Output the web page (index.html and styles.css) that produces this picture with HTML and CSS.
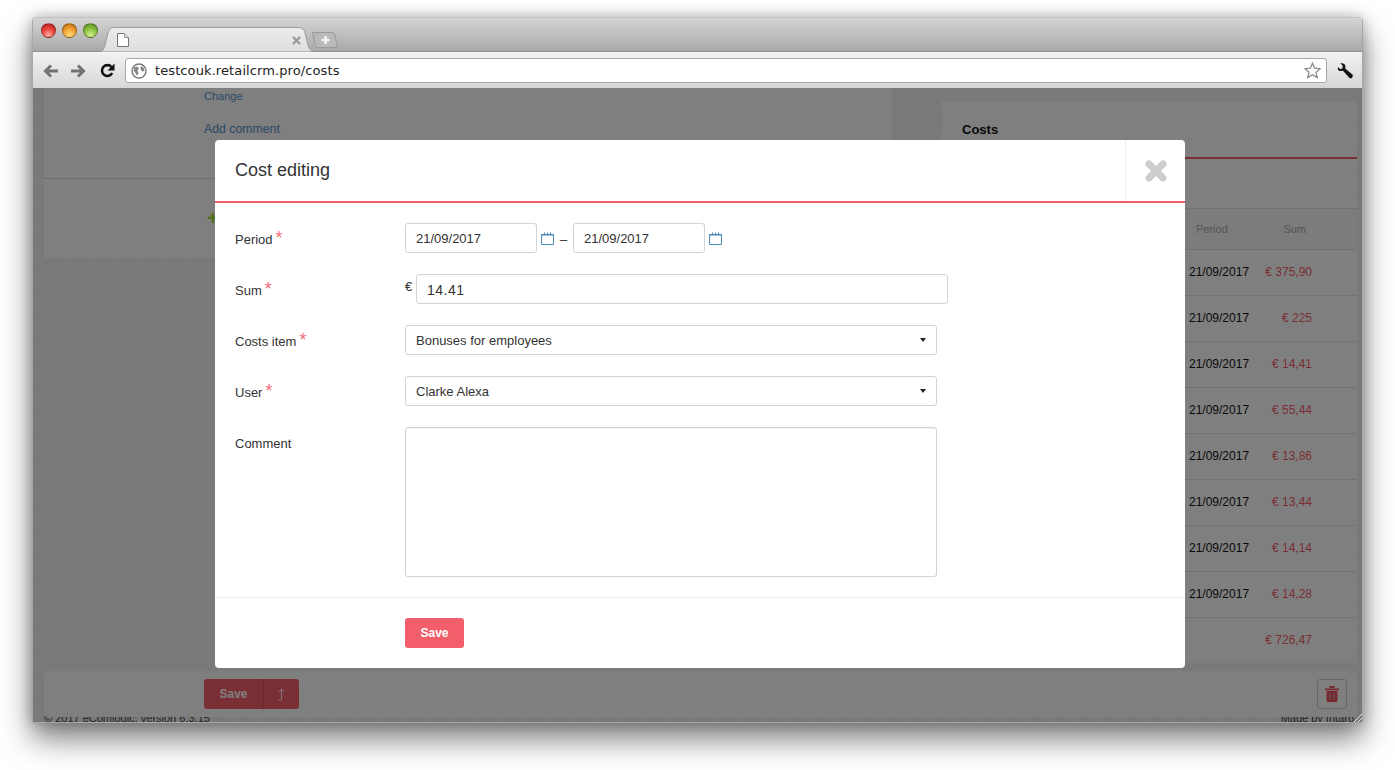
FILE: index.html
```html
<!DOCTYPE html>
<html lang="en">
<head>
    <meta charset="UTF-8">
    <title>testcouk.retailcrm.pro/costs</title>
    <link rel="stylesheet" href="styles.css">
</head>
<body>
    <div class="window">
        <div class="tabstrip">
            <div class="traffic">
                <span class="light light-red"></span>
                <span class="light light-amber"></span>
                <span class="light light-green"></span>
            </div>
            <div class="tab">
                <svg class="tab-shape" width="216" height="25" viewBox="0 0 216 25">
                    <defs>
                        <linearGradient id="tabFill" x1="0" y1="0" x2="0" y2="1">
                            <stop offset="0" stop-color="#ececec"/>
                            <stop offset="1" stop-color="#dedede"/>
                        </linearGradient>
                    </defs>
                    <path d="M0 24.5C4 24.5 5 22 6 18L9 6C10 2 12 .5 16 .5H199C203 .5 205 2 206 6L209 18C210 22 212 24.5 216 24.5" fill="url(#tabFill)" stroke="#9a9a9a"/>
                </svg>
                <svg class="tab-page" width="12" height="14" viewBox="0 0 12 14">
                    <path d="M.5.5H7.5L11.5 4.5V13.5H.5Z" fill="#fff" stroke="#777"/>
                    <path d="M7.5.5V4.5H11.5" fill="#e8e8e8" stroke="#999"/>
                </svg>
                <svg class="tab-close" width="9" height="9" viewBox="0 0 9 9">
                    <path d="M1 1L8 8M8 1L1 8" stroke="#999" stroke-width="2.4"/>
                </svg>
            </div>
            <div class="newtab">
                <svg width="26" height="16" viewBox="0 0 26 16">
                    <path d="M.5.5H20C22 .5 22.5 1.5 23 3L25.5 15.5H6C4 15.5 3.5 14 3 12.5Z" fill="#b9b9b9" stroke="#999"/>
                    <path d="M13.5 4V12M9.5 8H17.5" stroke="#f4f4f4" stroke-width="2.6"/>
                </svg>
            </div>
        </div>

        <div class="toolbar">
            <svg class="nav-icon" width="16" height="14" viewBox="0 0 16 14">
                <path d="M15 7H3M8 1.5L2.5 7L8 12.5" fill="none" stroke="#737373" stroke-width="3"/>
            </svg>
            <svg class="nav-icon nav-forward" width="16" height="14" viewBox="0 0 16 14">
                <path d="M1 7H13M8 1.5L13.5 7L8 12.5" fill="none" stroke="#737373" stroke-width="3"/>
            </svg>
            <svg class="nav-icon" width="15" height="15" viewBox="0 0 15 15">
                <path d="M12.2 10A5.4 5.4 0 1 1 11.5 4" fill="none" stroke="#111" stroke-width="2.6"/>
                <path d="M14.5 .5V7.5H7.5Z" fill="#111"/>
            </svg>
            <div class="omnibox">
                <svg class="globe" width="16" height="16" viewBox="0 0 16 16">
                    <circle cx="8" cy="8" r="7" fill="#fff" stroke="#777" stroke-width="1.4"/>
                    <path d="M3 4.5L6 3.5L8 5L6.5 7.5L7.5 10L6 13L4.5 10L2.5 7.5ZM10 3L13 5L13.5 8L11 8.5L9.5 6Z" fill="#888"/>
                </svg>
                <span class="url">testcouk.retailcrm.pro/costs</span>
                <svg class="star" width="17" height="17" viewBox="0 0 17 17">
                    <path d="M8.5 1.2L10.7 6.2L16 6.7L12 10.3L13.2 15.6L8.5 12.8L3.8 15.6L5 10.3L1 6.7L6.3 6.2Z" fill="#fff" stroke="#8a8a8a" stroke-width="1.3"/>
                </svg>
            </div>
            <svg class="wrench" width="16" height="16" viewBox="0 0 16 16">
                <path d="M1 4.2L3.6 6.2L5.6 5L5.6 2.6L3.4.6C5.8-.2 8.2 1 8.4 3.6L8.2 5.4L15.4 11.6C16.2 12.6 15.8 14 15 14.8C14 15.6 12.8 15.6 12 14.6L6 7.8L4 8C1.6 8 .2 6.4 1 4.2Z" fill="#111"/>
            </svg>
        </div>

        <div class="page">
            <div class="page-columns">
                <div class="order-panel">
                    <div class="order-top">
                        <a class="link-small">Change</a>
                        <a class="link-comment">Add comment</a>
                    </div>
                    <div class="order-bottom">
                        <span class="plus">+</span>
                    </div>
                </div>
                <div class="costs-panel">
                    <div class="costs-title">Costs</div>
                    <div class="costs-gap"></div>
                    <div class="cost-row cost-head">
                        <span class="col-date">Period</span>
                        <span class="col-sum">Sum</span>
                    </div>
                    <div class="cost-row"><span class="col-date">21/09/2017</span><span class="col-sum">€ 375,90</span></div>
                    <div class="cost-row"><span class="col-date">21/09/2017</span><span class="col-sum">€ 225</span></div>
                    <div class="cost-row"><span class="col-date">21/09/2017</span><span class="col-sum">€ 14,41</span></div>
                    <div class="cost-row"><span class="col-date">21/09/2017</span><span class="col-sum">€ 55,44</span></div>
                    <div class="cost-row"><span class="col-date">21/09/2017</span><span class="col-sum">€ 13,86</span></div>
                    <div class="cost-row"><span class="col-date">21/09/2017</span><span class="col-sum">€ 13,44</span></div>
                    <div class="cost-row"><span class="col-date">21/09/2017</span><span class="col-sum">€ 14,14</span></div>
                    <div class="cost-row"><span class="col-date">21/09/2017</span><span class="col-sum">€ 14,28</span></div>
                    <div class="cost-row"><span class="col-date"></span><span class="col-sum">€ 726,47</span></div>
                </div>
            </div>

            <div class="action-bar">
                <div class="split-btn">
                    <span class="split-save">Save</span>
                    <span class="split-up">
                        <svg width="9" height="13" viewBox="0 0 10 15">
                            <path d="M1.5 14H3.5C4.5 14 5 13.5 5 12.5V2M2 4.5L5 1.2L8 4.5" fill="none" stroke="#fff" stroke-width="1.1"/>
                        </svg>
                    </span>
                </div>
                <div class="trash-btn">
                    <svg width="14" height="16" viewBox="0 0 14 16">
                        <path d="M0 2.5H14V4.2H0ZM4.5 0H9.5V2H4.5ZM1.5 5H12.5V14.5C12.5 15.4 12 16 11 16H3C2 16 1.5 15.4 1.5 14.5Z" fill="#f0505c"/>
                        <path d="M5 7V14M9 7V14" stroke="#c8b0b0" stroke-width="1.2"/>
                    </svg>
                </div>
            </div>
            <div class="page-footer">
                <span>© 2017 eComlogic, version 6.3.15</span>
                <span>Made by Intaro</span>
            </div>

            <div class="overlay"></div>

            <div class="modal">
                <div class="modal-head">
                    <div class="modal-title">Cost editing</div>
                    <div class="modal-close">
                        <svg width="22" height="22" viewBox="0 0 22 22">
                            <path d="M4 4L18 18M18 4L4 18" stroke="#cdcdcd" stroke-width="7" stroke-linecap="round"/>
                        </svg>
                    </div>
                </div>
                <div class="modal-body">
                    <div class="form-row">
                        <label class="form-label">Period<span class="req">*</span></label>
                        <div class="form-controls">
                            <div class="input input-date">21/09/2017</div>
                            <svg class="cal" width="13" height="13" viewBox="0 0 13 13">
                                <path d="M.5 2.5H12.5V12.5H.5Z" fill="none" stroke="#4a8ab5"/>
                                <path d="M.5 3H12.5M3.5 .5V3M6.5 .5V3M9.5 .5V3" stroke="#4a8ab5"/>
                            </svg>
                            <span class="dash">–</span>
                            <div class="input input-date">21/09/2017</div>
                            <svg class="cal" width="13" height="13" viewBox="0 0 13 13">
                                <path d="M.5 2.5H12.5V12.5H.5Z" fill="none" stroke="#4a8ab5"/>
                                <path d="M.5 3H12.5M3.5 .5V3M6.5 .5V3M9.5 .5V3" stroke="#4a8ab5"/>
                            </svg>
                        </div>
                    </div>
                    <div class="form-row">
                        <label class="form-label">Sum<span class="req">*</span></label>
                        <div class="form-controls">
                            <span class="currency">€</span>
                            <div class="input input-sum">14.41</div>
                        </div>
                    </div>
                    <div class="form-row">
                        <label class="form-label">Costs item<span class="req">*</span></label>
                        <div class="form-controls">
                            <div class="input input-select">Bonuses for employees<span class="caret"></span></div>
                        </div>
                    </div>
                    <div class="form-row">
                        <label class="form-label">User<span class="req">*</span></label>
                        <div class="form-controls">
                            <div class="input input-select">Clarke Alexa<span class="caret"></span></div>
                        </div>
                    </div>
                    <div class="form-row form-row-last">
                        <label class="form-label">Comment</label>
                        <div class="form-controls">
                            <div class="input input-area"></div>
                        </div>
                    </div>
                </div>
                <div class="modal-foot">
                    <div class="btn-save">Save</div>
                </div>
            </div>

            <div class="grip"></div>
        </div>
    </div>
</body>
</html>
```

FILE: styles.css
```css
* {
    margin: 0;
    padding: 0;
    box-sizing: border-box;
}

html, body {
    height: 100%;
    background: #fff;
    overflow: hidden;
}

body {
    font-family: 'Liberation Sans', Arial, sans-serif;
    padding: 17px 32px 0 32px;
    color: #333;
}

.window {
    width: 1331px;
    height: 706px;
    border: 1px solid #a8a8a8;
    border-top: 0;
    border-radius: 4px 4px 0 0;
    box-shadow: 0 16px 30px rgba(0, 0, 0, 0.5), 0 0 14px rgba(0, 0, 0, 0.25);
    display: flex;
    flex-direction: column;
    overflow: hidden;
}

/* browser chrome */
.tabstrip {
    height: 35px;
    background: linear-gradient(#d4d4d4, #a9a9a9);
    border-top: 1px solid #c2c2c2;
    border-bottom: 1px solid #8f8f8f;
    display: flex;
    align-items: flex-end;
    padding-left: 8px;
    flex-shrink: 0;
}

.traffic {
    display: flex;
    gap: 6px;
    align-self: flex-start;
    padding-top: 5px;
    width: 58px;
}

.light {
    width: 15px;
    height: 15px;
    flex-shrink: 0;
    border-radius: 50%;
    border: 1px solid rgba(0, 0, 0, 0.3);
}

.light-red {
    background: radial-gradient(circle at 50% 85%, #ffb0a8 0, #ee4a40 45%, #b01818 100%);
}

.light-amber {
    background: radial-gradient(circle at 50% 85%, #ffe27a 0, #f0a030 50%, #b86a10 100%);
}

.light-green {
    background: radial-gradient(circle at 50% 85%, #d5f090 0, #8cc040 50%, #4f8a20 100%);
}

.tab {
    position: relative;
    width: 216px;
    height: 25px;
    margin-bottom: -1px;
    flex-shrink: 0;
}

.tab-shape {
    position: absolute;
    left: 0;
    top: 0;
}

.tab-page {
    position: absolute;
    left: 18px;
    top: 6px;
}

.tab-close {
    position: absolute;
    left: 193px;
    top: 9px;
}

.newtab {
    margin-left: -3px;
    margin-bottom: 3px;
    height: 16px;
}

.toolbar {
    height: 36px;
    background: linear-gradient(#f2f2f2, #d6d6d6);
    border-top: 1px solid #f6f6f6;
    display: flex;
    align-items: center;
    padding-left: 10px;
    flex-shrink: 0;
}

.nav-icon {
    margin-right: 11px;
    flex-shrink: 0;
}

.nav-forward {
    margin-right: 14px;
}

.omnibox {
    width: 1202px;
    height: 25px;
    margin-left: -1px;
    background: #fff;
    border: 1px solid #a8a8a8;
    border-radius: 3px;
    display: flex;
    align-items: center;
    padding: 0 5px;
}

.globe {
    margin-right: 8px;
    flex-shrink: 0;
}

.url {
    font-family: 'DejaVu Sans', sans-serif;
    font-size: 13px;
    letter-spacing: 0.1px;
    color: #222;
    flex: 1;
}

.wrench {
    margin-left: 10px;
}

/* page behind the dialog */
.page {
    flex: 1;
    position: relative;
    background-color: #f5f5f5;
    background-image:
        repeating-linear-gradient(0deg, rgba(0, 0, 0, 0.012) 0 1px, transparent 1px 3px),
        repeating-linear-gradient(90deg, rgba(0, 0, 0, 0.012) 0 1px, transparent 1px 3px);
    overflow: hidden;
    padding: 0 5px 0 11px;
}

.page-columns {
    display: flex;
    justify-content: space-between;
    align-items: flex-start;
    height: 583px;
}

.order-panel {
    width: 848px;
    background: #fff;
    height: 170px;
    font-size: 12px;
}

.order-top {
    height: 91px;
    border-bottom: 1px solid #ddd;
    padding: 2px 0 0 160px;
    display: flex;
    flex-direction: column;
}

.link-small {
    font-size: 11px;
    line-height: 12px;
    color: #5590cc;
}

.link-comment {
    margin-top: 20px;
    line-height: 14px;
    font-size: 12.3px;
    color: #5590cc;
}

.order-bottom {
    padding: 29px 0 0 163px;
}

.plus {
    font-size: 20px;
    font-weight: 700;
    color: #a0e030;
    line-height: 20px;
}

.costs-panel {
    width: 415px;
    margin-top: 13px;
    background: #fff;
    font-size: 12px;
}

.costs-title {
    height: 58px;
    padding: 21px 0 0 20px;
    font-size: 13px;
    font-weight: 700;
    color: #111;
    border-bottom: 2px solid #f25f6a;
}

.costs-gap {
    height: 49px;
}

.cost-row {
    height: 46px;
    border-top: 1px solid #e4e4e4;
    display: flex;
    justify-content: flex-end;
    align-items: center;
    padding: 0 45px 2px 0;
    color: #111;
}

.cost-head {
    height: 41px;
    background: #f8f8f8;
    font-size: 11px;
    padding-bottom: 0;
}

.col-date {
    width: 60px;
}

.col-sum {
    width: 63px;
    text-align: right;
    color: #f25f6a;
}

.cost-head .col-date {
    padding-left: 7px;
    color: #aaa;
}

.cost-head .col-sum {
    color: #aaa;
    padding-right: 6px;
}

.action-bar {
    height: 46px;
    background: #fff;
    border-radius: 4px;
    display: flex;
    justify-content: space-between;
    align-items: center;
    padding: 0 10px 0 160px;
    position: relative;
}

.split-btn {
    display: flex;
    height: 30px;
    width: 95px;
    border-radius: 3px;
    background: #f25f6a;
    color: #fff;
    font-size: 12px;
    font-weight: 700;
    overflow: hidden;
}

.split-save {
    width: 60px;
    line-height: 30px;
    text-align: center;
    border-right: 1px solid #d84c56;
}

.split-up {
    flex: 1;
    display: flex;
    align-items: center;
    justify-content: center;
}

.trash-btn {
    width: 30px;
    height: 30px;
    border: 1px solid #ccc;
    border-radius: 3px;
    display: flex;
    align-items: center;
    justify-content: center;
}

.page-footer {
    display: flex;
    justify-content: space-between;
    font-size: 11px;
    margin-top: -5px;
    padding-right: 3px;
    color: #444;
}

.overlay {
    position: absolute;
    inset: 0;
    background: rgba(0, 0, 0, 0.5);
}

.grip {
    position: absolute;
    right: 0;
    bottom: 0;
    width: 10px;
    height: 10px;
    background: repeating-linear-gradient(135deg, transparent 0 2px, #ddd 2px 3px);
    clip-path: polygon(100% 0, 100% 100%, 0 100%);
}

/* dialog */
.modal {
    position: absolute;
    left: 182px;
    top: 52px;
    width: 970px;
    height: 528px;
    background: #fff;
    border-radius: 4px;
    display: flex;
    flex-direction: column;
}

.modal-head {
    height: 63px;
    border-bottom: 2px solid #f25f6a;
    display: flex;
    justify-content: space-between;
    flex-shrink: 0;
}

.modal-title {
    font-size: 18px;
    line-height: 61px;
    padding-left: 20px;
    color: #333;
}

.modal-close {
    width: 60px;
    border-left: 1px solid #eee;
    display: flex;
    align-items: center;
    justify-content: center;
}

.modal-body {
    flex: 1;
    padding: 20px 20px 0 20px;
    border-bottom: 1px solid #eee;
    display: flex;
    flex-direction: column;
    gap: 21px;
}

.form-row {
    display: flex;
    height: 30px;
}

.form-row-last {
    height: 150px;
}

.form-label {
    width: 170px;
    font-size: 13px;
    line-height: 34px;
    color: #333;
    flex-shrink: 0;
}

.req {
    color: #f4707a;
    font-size: 18px;
    margin-left: 3px;
    line-height: 16px;
}

.form-controls {
    display: flex;
    align-items: flex-start;
}

.input {
    height: 30px;
    border: 1px solid #d4d4d4;
    border-radius: 3px;
    background: #fff;
    font-size: 13px;
    line-height: 30px;
    padding: 0 10px;
    color: #333;
    position: relative;
}

.input-date {
    width: 132px;
}

.cal {
    margin: 9px 0 0 4px;
}

.dash {
    font-size: 13px;
    line-height: 34px;
    width: 19px;
    text-align: center;
}

.currency {
    font-size: 13px;
    width: 11px;
    line-height: 26px;
}

.input-sum {
    width: 532px;
    font-size: 14px;
    letter-spacing: 0.5px;
}

.input-select {
    width: 532px;
}

.input-area {
    width: 532px;
    height: 150px;
    box-shadow: inset 0 1px 1px rgba(0, 0, 0, 0.05);
}

.caret {
    position: absolute;
    right: 10px;
    top: 12px;
    width: 0;
    height: 0;
    border-left: 3.5px solid transparent;
    border-right: 3.5px solid transparent;
    border-top: 4px solid #222;
}

.modal-foot {
    height: 70px;
    padding: 20px 0 0 190px;
    flex-shrink: 0;
}

.btn-save {
    width: 59px;
    height: 30px;
    background: #f25f6a;
    border-radius: 3px;
    color: #fff;
    font-size: 12px;
    font-weight: 700;
    line-height: 30px;
    text-align: center;
}
```
